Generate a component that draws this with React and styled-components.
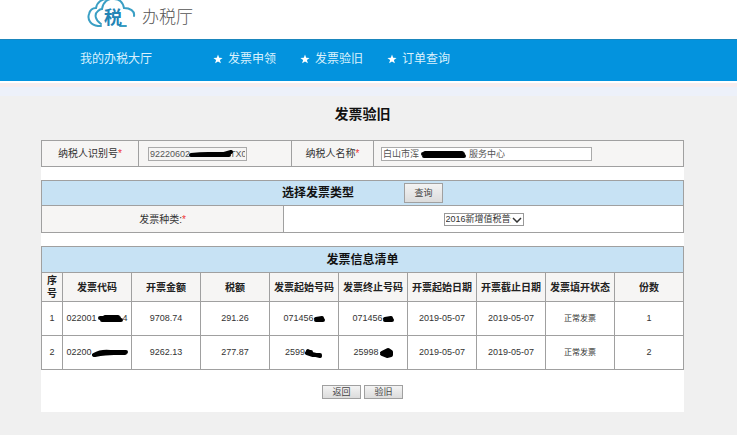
import React, {useState} from 'react';
import styled, {createGlobalStyle} from "styled-components";

const GlobalStyle = createGlobalStyle`
  body{
    margin: 0;
    background-color: #f0f0f0;
    font-family: "Liberation Sans", "Noto Sans CJK SC", sans-serif;
    font-size: 10px;
    color: #333;
  }

  *{
    box-sizing: border-box;
  }
`

const Header = styled.header`
  display: flex;
  gap: 6px;
  height: 39px;
  padding-left: 87px;
  background-color: #fff;
`

const Brand = styled.span`
  padding-top: 6px;
  font-size: 17px;
  font-weight: 300;
  line-height: 24px;
  color: #555;
`

const Nav = styled.nav`
  display: flex;
  align-items: center;
  height: 42px;
  padding: 0 0 3px 80px;
  background-color: #0393de;
  border-top: 1px solid #1a86bd;
`

const NavLink = styled.a`
  display: flex;
  align-items: center;
  gap: 5px;
  margin-right: ${props => props.$home ? "61px" : "24px"};
  font-size: 12px;
  line-height: 16px;
  color: #d9f1fd;
  text-decoration: none;
`

const NavShade = styled.div`
  height: 15px;
  background: linear-gradient(#fff 0 2px, #f8eced 2px 6px, #edf1fa 6px 15px);
`

const Main = styled.main`
  margin: 0 53px 0 41px;
`

const Title = styled.h1`
  margin: 0;
  padding: 8px 0 16px;
  font-size: 14px;
  line-height: 20px;
  text-align: center;
  color: #111;
`

const Panel = styled.div`
  display: flex;
  flex-direction: column;
  gap: 13px;
  background-color: #fff;
`

const Table = styled.table`
  width: 100%;
  table-layout: fixed;
  border-collapse: collapse;
`

const Cell = styled.td`
  height: ${props => props.$height || 26}px;
  padding: 0 ${props => props.$pad || 0}px;
  border: 1px solid #a0a0a0;
  background-color: ${props => props.$shaded ? "#f6f5f4" : "#fff"};
  font-size: ${props => props.$size || 9}px;
  line-height: 13px;
  text-align: ${props => props.$align || "center"};
  white-space: nowrap;
`

const HeadCell = styled(Cell).attrs({as: "th"})`
  background-color: #f6f5f4;
  font-size: 10px;
  color: #222;
  white-space: ${props => props.$wrap ? "normal" : "nowrap"};
`

const SectionCell = styled(Cell).attrs({as: "th"})`
  background-color: #c7e2f4;
  font-size: 12px;
  line-height: 16px;
  color: #111;
`

const SectionRow = styled.div`
  display: flex;
  align-items: center;
  justify-content: center;
  gap: 50px;
`

const Required = styled.span`
  color: #e33;
`

const Field = styled.div`
  position: relative;
  display: flex;
  width: ${props => props.$width}px;
  max-width: 100%;
`

const TextInput = styled.input`
  width: 100%;
  height: 14px;
  padding: 0 1px;
  border: 1px solid #aaa;
  outline: none;
  background-color: ${props => props.$plain ? "transparent" : "#fff"};
  font-family: inherit;
  font-size: 9px;
  color: #555;
`

const SelectBox = styled.div`
  position: relative;
  display: inline-flex;
  vertical-align: middle;
`

const Select = styled.select`
  width: 80px;
  height: 13px;
  padding: 0 12px 0 1px;
  border: 1px solid #999;
  border-radius: 0;
  appearance: none;
  background-color: #fff;
  font-family: inherit;
  font-size: 9px;
  color: #333;
`

const Chevron = styled.svg`
  position: absolute;
  top: 4px;
  right: 2px;
  pointer-events: none;
`

const Button = styled.button`
  width: 39px;
  height: ${props => props.$tall ? "20px" : "14px"};
  padding: 0;
  border: 1px solid #a0a0a0;
  background: linear-gradient(#f3f3f3, #dcdcdc);
  font-family: inherit;
  font-size: 9px;
  line-height: 12px;
  color: #444;
`

const Actions = styled.div`
  display: flex;
  justify-content: center;
  gap: 3px;
  padding: 2px 0 13px;
`

const InlineScribble = styled.svg`
  vertical-align: middle;
`

const FieldScribble = styled.svg`
  position: absolute;
  top: 1px;
  left: ${props => props.$left}px;
  pointer-events: none;
`

const strokes = {
  thin: "M3 7 Q12 6 20 6 T36 6 L43 4 M4 7 L41 7",
  wide: "M3 6 L43 6 M4 8 L44 8 M5 5 L42 5",
  bar: "M3 5 L22 5 M5 7 L24 7 M8 4 L21 4",
  wave: "M2 8 Q9 4 18 5 L34 5 M3 8 Q14 6 22 6 L33 6",
  dot: "M2 6 L8 5 M2 7 L9 7",
  tail: "M3 4 L7 7 L15 9 M2 6 L8 8 L15 8 M4 5 L6 5",
  blob: "M3 6 L9 3 L12 5 L12 8 L8 9 L3 7 L11 6",
}

function Scribble({as: Svg = InlineScribble, shape, width, ...rest}) {
  return (
    <Svg width={width} height="12" aria-hidden="true" {...rest}>
      <path d={strokes[shape]} fill="none" stroke="#000" strokeWidth="4" strokeLinecap="round" strokeLinejoin="round" />
    </Svg>
  )
}

function CloudLogo() {
  return (
    <svg width="49" height="29" viewBox="0 0 49 29" aria-hidden="true">
      <g fill="none" stroke="#3a9fc4" strokeWidth="2" strokeLinecap="round">
        <path d="M14 26 H11 C4 25 0 20 2 14 C3 10 6 8 9 8 C10 2 15 -1 20 -1" />
        <path d="M14 24 C8 20 7 14 11 11 C12 10 13 9 15 9 C16 2 21 -2 27 -1 C33 -1 36 3 37 8 C43 8 48 11 47 16" />
        <path d="M33 26 H39" />
      </g>
      <text x="17" y="24" fontSize="18" fontWeight="700" fill="#2384b5" fontFamily="Noto Sans CJK SC, sans-serif">税</text>
    </svg>
  )
}

function Star() {
  return (
    <svg width="10" height="10" viewBox="0 0 10 10" aria-hidden="true">
      <path fill="#fff" d="M5 0.5 L6.2 3.8 L9.6 3.9 L6.9 6 L7.9 9.3 L5 7.4 L2.1 9.3 L3.1 6 L0.4 3.9 L3.8 3.8 Z" />
    </svg>
  )
}

const links = ["发票申领", "发票验旧", "订单查询"];

const columns = ["序号", "发票代码", "开票金额", "税额", "发票起始号码", "发票终止号码", "开票起始日期", "开票截止日期", "发票填开状态", "份数"];

const invoices = [
  {
    id: 1,
    code: ["022001", "bar", 26, "4"],
    amount: "9708.74",
    tax: "291.26",
    first: ["071456", "dot", 11, ""],
    last: ["071456", "dot", 11, ""],
    start: "2019-05-07",
    end: "2019-05-07",
    status: "正常发票",
    count: 1,
  },
  {
    id: 2,
    code: ["02200", "wave", 36, ""],
    amount: "9262.13",
    tax: "277.87",
    first: ["2599", "tail", 18, ""],
    last: ["25998", "blob", 14, ""],
    start: "2019-05-07",
    end: "2019-05-07",
    status: "正常发票",
    count: 2,
  },
];

function Masked({value}) {
  const [before, shape, width, after] = value;
  return <>{before}<Scribble shape={shape} width={width} />{after}</>
}

function TaxpayerTable() {
  const [taxId, setTaxId] = useState("92220602                TX0");
  const [name, setName] = useState("白山市浑                    服务中心");

  return (
    <Table>
      <colgroup>
        <col width="97" />
        <col width="153" />
        <col width="82" />
        <col />
      </colgroup>
      <tbody>
        <tr>
          <Cell $shaded $size={10}><label htmlFor="taxId">纳税人识别号<Required>*</Required></label></Cell>
          <Cell $shaded $align="left" $pad={9}>
            <Field $width={99}>
              <TextInput id="taxId" $plain value={taxId} onChange={(e) => setTaxId(e.target.value)} />
              <Scribble as={FieldScribble} shape="thin" width="46" $left={40} />
            </Field>
          </Cell>
          <Cell $shaded $size={10}><label htmlFor="name">纳税人名称<Required>*</Required></label></Cell>
          <Cell $shaded $align="left" $pad={7}>
            <Field $width={211}>
              <TextInput id="name" value={name} onChange={(e) => setName(e.target.value)} />
              <Scribble as={FieldScribble} shape="wide" width="47" $left={39} />
            </Field>
          </Cell>
        </tr>
      </tbody>
    </Table>
  )
}

function TypeTable() {
  return (
    <Table>
      <colgroup>
        <col width="242" />
        <col />
      </colgroup>
      <tbody>
        <tr>
          <SectionCell colSpan={2} $height={25}>
            <SectionRow>
              选择发票类型
              <Button type="button" $tall>查询</Button>
            </SectionRow>
          </SectionCell>
        </tr>
        <tr>
          <Cell $shaded $size={10} $height={27}><label htmlFor="kind">发票种类:<Required>*</Required></label></Cell>
          <Cell $height={27}>
            <SelectBox>
              <Select id="kind">
                <option>2016新增值税普通发票</option>
              </Select>
              <Chevron width="10" height="6" aria-hidden="true">
                <path d="M1 1 L5 5 L9 1" fill="none" stroke="#333" strokeWidth="1.5" />
              </Chevron>
            </SelectBox>
          </Cell>
        </tr>
      </tbody>
    </Table>
  )
}

function InvoiceTable() {
  return (
    <Table>
      <colgroup>
        <col width="21" />
        {columns.slice(1).map(name => <col key={name} />)}
      </colgroup>
      <thead>
        <tr>
          <SectionCell colSpan={columns.length}>发票信息清单</SectionCell>
        </tr>
        <tr>
          {columns.map((name, i) => (
            <HeadCell key={name} $height={29} $wrap={i === 0} $pad={i === 0 ? 4 : 0}>{name}</HeadCell>
          ))}
        </tr>
      </thead>
      <tbody>
        {invoices.map(row => (
          <tr key={row.id}>
            <Cell $height={34}>{row.id}</Cell>
            <Cell><Masked value={row.code} /></Cell>
            <Cell>{row.amount}</Cell>
            <Cell>{row.tax}</Cell>
            <Cell><Masked value={row.first} /></Cell>
            <Cell><Masked value={row.last} /></Cell>
            <Cell>{row.start}</Cell>
            <Cell>{row.end}</Cell>
            <Cell $size={8}>{row.status}</Cell>
            <Cell>{row.count}</Cell>
          </tr>
        ))}
      </tbody>
    </Table>
  )
}

function App() {
  return (
    <>
      <GlobalStyle />
      <Header>
        <CloudLogo />
        <Brand>办税厅</Brand>
      </Header>
      <Nav>
        <NavLink href="#" $home>我的办税大厅</NavLink>
        {links.map(text => (
          <NavLink href="#" key={text}><Star />{text}</NavLink>
        ))}
      </Nav>
      <NavShade />
      <Main>
        <Title>发票验旧</Title>
        <Panel>
          <TaxpayerTable />
          <TypeTable />
          <InvoiceTable />
          <Actions>
            <Button type="button">返回</Button>
            <Button type="button">验旧</Button>
          </Actions>
        </Panel>
      </Main>
    </>
  );
}

export default App;
